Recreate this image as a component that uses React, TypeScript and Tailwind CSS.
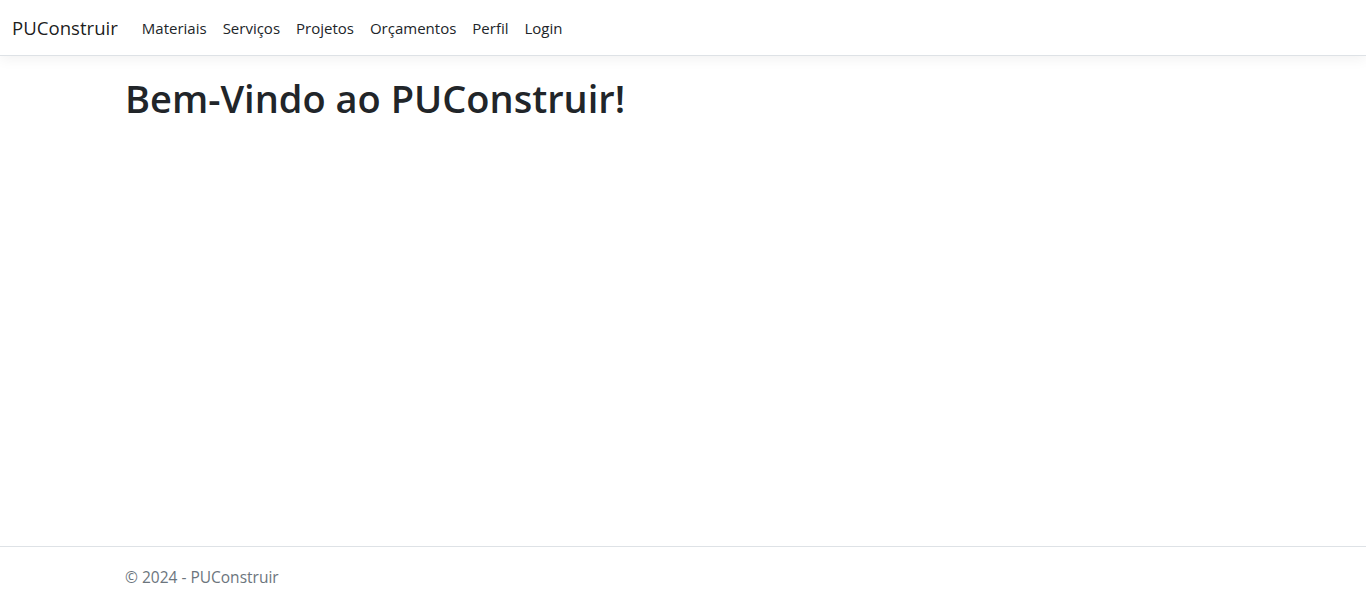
const links = ["Materiais", "Serviços", "Projetos", "Orçamentos", "Perfil", "Login"];

export default function App() {
  return (
    <div className="flex min-h-screen flex-col bg-white font-['Open_Sans',sans-serif] text-[#212529]">
      <header className="mb-4 border-b border-[#dee2e6] bg-white shadow-[0_4px_12px_rgba(0,0,0,0.05)]">
        <nav className="flex h-[55px] items-center px-3">
          <a className="mr-4 text-[18.6px] text-[rgba(0,0,0,0.9)]">PUConstruir</a>
          <ul className="flex">
            {links.map((l) => (
              <li key={l}>
                <a className="px-2 text-[15px] text-[#212529]">{l}</a>
              </li>
            ))}
          </ul>
        </nav>
      </header>

      <main className="flex-1">
        <div className="mx-auto w-[1140px] px-3">
          <h1 className="mt-[4px] text-[38px] font-semibold leading-[1.2]">
            Bem-Vindo ao PUConstruir!
          </h1>
        </div>
      </main>

      <footer className="border-t border-[#dee2e6] leading-[60px] whitespace-nowrap text-[#6c757d]">
        <div className="mx-auto w-[1140px] px-3 text-[15.5px]">&copy; 2024 - PUConstruir</div>
      </footer>
    </div>
  );
}
